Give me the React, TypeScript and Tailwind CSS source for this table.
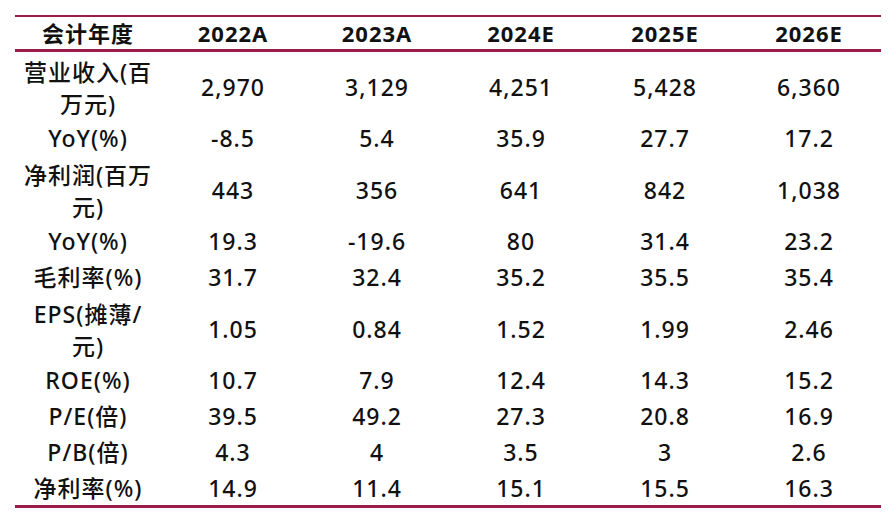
const years = ['2022A', '2023A', '2024E', '2025E', '2026E'];

const rows: { label: string[]; values: string[]; tall?: boolean }[] = [
  { label: ['营业收入(百', '万元)'], values: ['2,970', '3,129', '4,251', '5,428', '6,360'], tall: true },
  { label: ['YoY(%)'], values: ['-8.5', '5.4', '35.9', '27.7', '17.2'] },
  { label: ['净利润(百万', '元)'], values: ['443', '356', '641', '842', '1,038'], tall: true },
  { label: ['YoY(%)'], values: ['19.3', '-19.6', '80', '31.4', '23.2'] },
  { label: ['毛利率(%)'], values: ['31.7', '32.4', '35.2', '35.5', '35.4'] },
  { label: ['EPS(摊薄/', '元)'], values: ['1.05', '0.84', '1.52', '1.99', '2.46'], tall: true },
  { label: ['ROE(%)'], values: ['10.7', '7.9', '12.4', '14.3', '15.2'] },
  { label: ['P/E(倍)'], values: ['39.5', '49.2', '27.3', '20.8', '16.9'] },
  { label: ['P/B(倍)'], values: ['4.3', '4', '3.5', '3', '2.6'] },
  { label: ['净利率(%)'], values: ['14.9', '11.4', '15.1', '15.5', '16.3'] },
];

export default function App() {
  return (
    <div
      className="w-[896px] h-[526px] bg-white pt-[15px] px-[15px] text-[#111] text-[23px] tracking-[1px] font-medium"
      style={{ fontFamily: '"Noto Sans", "Noto Sans CJK SC", sans-serif' }}
    >
      <div className="w-[866px] border-t-2 border-b-[3px] border-[#9b1c45]">
        {/* Header */}
        <div className="grid grid-cols-[146px_repeat(5,144px)] h-[35px] items-center font-bold text-[22px] border-b-[3px] border-[#9b1c45]">
          <div className="text-center">会计年度</div>
          {years.map((y) => (
            <div key={y} className="text-center">{y}</div>
          ))}
        </div>

        {rows.map((r, i) => (
          <div
            key={i}
            className={`grid grid-cols-[146px_repeat(5,144px)] items-center ${r.tall ? 'h-[67px]' : 'h-[36px]'}`}
          >
            <div className={`text-center leading-[32px] ${r.tall ? 'pt-[4px]' : 'pt-[2px]'}`}>
              {r.label.map((l, j) => (
                <div key={j}>{l}</div>
              ))}
            </div>
            {r.values.map((v, j) => (
              <div key={j} className="text-center pt-[2px]">{v}</div>
            ))}
          </div>
        ))}
      </div>
    </div>
  );
}
